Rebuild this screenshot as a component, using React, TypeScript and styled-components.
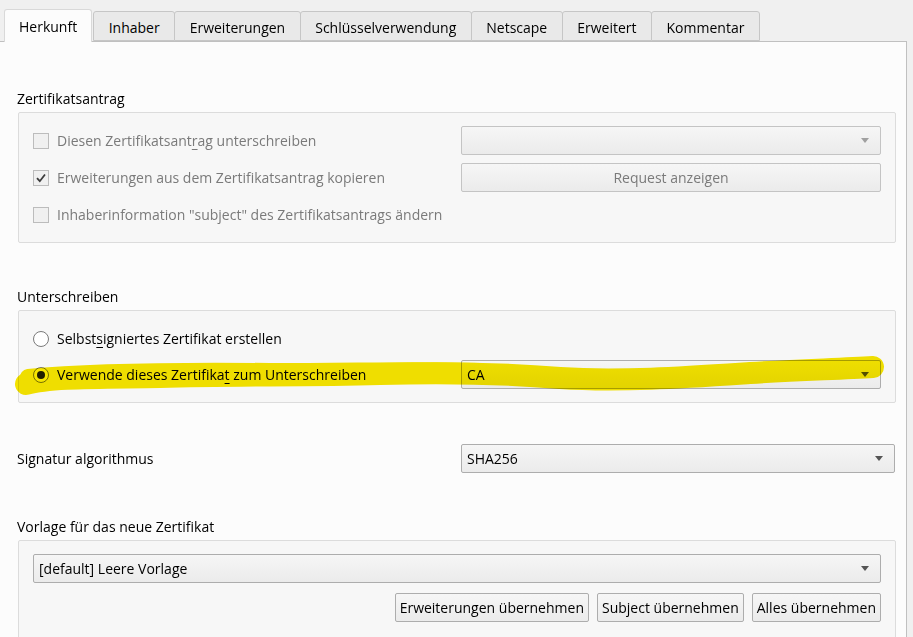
import React from 'react'
import styled, { createGlobalStyle } from 'styled-components'

const GlobalStyle = createGlobalStyle`
  html, body {
    margin: 0;
    padding: 0;
    background: #f0f0f0;
  }
  body {
    font-family: "Open Sans", "Noto Sans", "DejaVu Sans", sans-serif;
    font-size: 14px;
    color: #000;
  }
`

const Screen = styled.div`
  position: relative;
  width: 913px;
  height: 637px;
  overflow: hidden;
`

const TabBar = styled.div`
  display: flex;
  align-items: flex-end;
  height: 41px;
  padding-left: 4px;
  box-sizing: border-box;
`

const Tab = styled.div<{ $active?: boolean }>`
  position: relative;
  box-sizing: border-box;
  height: ${p => (p.$active ? 33 : 30)}px;
  padding: 0 ${p => (p.$active ? 14 : 14.5)}px;
  margin-right: ${p => (p.$active ? 1 : -1)}px;
  margin-bottom: ${p => (p.$active ? -1 : 0)}px;
  display: flex;
  align-items: center;
  padding-top: ${p => (p.$active ? 0 : 2)}px;
  border: 1px solid ${p => (p.$active ? '#d9d9d9' : '#c6c6c6')};
  border-bottom: ${p => (p.$active ? 'none' : '1px solid #c6c6c6')};
  border-radius: 3px 3px 0 0;
  background: ${p => (p.$active ? '#fcfcfc' : '#e9e9e9')};
  z-index: ${p => (p.$active ? 2 : 1)};
  white-space: nowrap;
`

const Pane = styled.div`
  box-sizing: border-box;
  width: 908px;
  margin-left: -1px;
  height: 600px;
  border: 1px solid #c0c0c0;
  border-bottom: none;
  background: #fcfcfc;
  padding: 47px 10px 0 18px;
`

const SectionTitle = styled.div`
  height: 20px;
  line-height: 20px;
  margin-left: -1px;
  margin-bottom: 3px;
`

const FieldLabel = styled.div`
  line-height: 20px;
  margin-left: -1px;
`

const GroupBox = styled.div`
  box-sizing: border-box;
  border: 1px solid #dcdcdc;
  border-radius: 2px;
  background: #f7f7f7;
  padding: 13px 14px 13px 14px;
`

const FormGrid = styled.div<{ $gap: number }>`
  display: grid;
  grid-template-columns: 1fr 420px;
  grid-auto-rows: 29px;
  row-gap: ${p => p.$gap}px;
  column-gap: 8px;
  align-items: center;
`

const OptionRow = styled.label<{ $disabled?: boolean }>`
  display: flex;
  align-items: center;
  gap: 8px;
  color: ${p => (p.$disabled ? '#7a7a7a' : '#000')};
  white-space: nowrap;
`

const CheckBox = styled.span`
  box-sizing: border-box;
  width: 16px;
  height: 16px;
  border: 1px solid #bcbcbc;
  background: #f0f0f0;
  display: flex;
  align-items: center;
  justify-content: center;
  flex: none;
`

const Radio = styled.span<{ $checked?: boolean }>`
  box-sizing: border-box;
  width: 16px;
  height: 16px;
  border-radius: 50%;
  border: 1px solid #7a7a7a;
  background: #fff;
  display: flex;
  align-items: center;
  justify-content: center;
  flex: none;
  &::after {
    content: '';
    display: ${p => (p.$checked ? 'block' : 'none')};
    width: 8px;
    height: 8px;
    border-radius: 50%;
    background: #222;
  }
`

const Mn = styled.span`
  text-decoration: underline;
  text-underline-offset: 3px;
`

const Combo = styled.div<{ $disabled?: boolean }>`
  box-sizing: border-box;
  height: 29px;
  width: 100%;
  border: 1px solid ${p => (p.$disabled ? '#c4c4c4' : '#adadad')};
  border-radius: 2px;
  background: linear-gradient(#f6f6f6, #ebebeb);
  display: flex;
  align-items: center;
  padding: 0 11px 0 5px;
  color: ${p => (p.$disabled ? '#7a7a7a' : '#000')};
  &::after {
    content: '';
    margin-left: auto;
    border-left: 4px solid transparent;
    border-right: 4px solid transparent;
    border-top: 5px solid ${p => (p.$disabled ? '#a0a0a0' : '#555')};
  }
`

const PushButton = styled.div<{ $disabled?: boolean }>`
  box-sizing: border-box;
  height: 29px;
  border: 1px solid ${p => (p.$disabled ? '#c4c4c4' : '#adadad')};
  border-radius: 2px;
  background: linear-gradient(#f6f6f6, #ebebeb);
  display: flex;
  align-items: center;
  justify-content: center;
  padding: 0 4px;
  color: ${p => (p.$disabled ? '#7a7a7a' : '#000')};
  white-space: nowrap;
`

const Spacer = styled.div<{ $h: number }>`
  height: ${p => p.$h}px;
`

const AlgoRow = styled.div`
  display: grid;
  grid-template-columns: 1fr 434px;
  grid-template-rows: 29px;
  align-items: center;
  padding-right: 1px;
`

const TemplateStack = styled.div`
  display: flex;
  flex-direction: column;
  gap: 10px;
  padding-bottom: 20px;
`

const ButtonRow = styled.div`
  display: flex;
  justify-content: flex-end;
  gap: 8px;
`

const Highlight = styled.svg`
  position: absolute;
  left: 0;
  top: 0;
  pointer-events: none;
  mix-blend-mode: multiply;
`

const tabs = ['Herkunft', 'Inhaber', 'Erweiterungen', 'Schlüsselverwendung', 'Netscape', 'Erweitert', 'Kommentar']

export default function App() {
  return (
    <Screen>
      <GlobalStyle />
      <TabBar>
        {tabs.map((t, i) => (
          <Tab key={t} $active={i === 0}>{t}</Tab>
        ))}
      </TabBar>
      <Pane>
        <SectionTitle>Zertifikatsantrag</SectionTitle>
        <GroupBox>
          <FormGrid $gap={8}>
            <OptionRow $disabled>
              <CheckBox />
              <span>Diesen Zertifikatsant<Mn>r</Mn>ag unterschreiben</span>
            </OptionRow>
            <Combo $disabled />
            <OptionRow $disabled>
              <CheckBox>
                <svg width="12" height="12" viewBox="0 0 12 12">
                  <path d="M2 6.2 L4.8 9.2 L10 2.5" fill="none" stroke="#3c3c3c" strokeWidth="1.8" />
                </svg>
              </CheckBox>
              <span>Erweiterungen aus dem Zertifikatsantrag kopieren</span>
            </OptionRow>
            <PushButton $disabled>Request anzeigen</PushButton>
            <OptionRow $disabled>
              <CheckBox />
              <span>Inhaberinformation "subject" des Zertifikatsantrags ändern</span>
            </OptionRow>
            <div />
          </FormGrid>
        </GroupBox>

        <Spacer $h={44} />
        <SectionTitle>Unterschreiben</SectionTitle>
        <GroupBox>
          <FormGrid $gap={7}>
            <OptionRow>
              <Radio />
              <span>Selbst<Mn>s</Mn>igniertes Zertifikat erstellen</span>
            </OptionRow>
            <div />
            <OptionRow>
              <Radio $checked />
              <span>Verwende dieses Zertifika<Mn>t</Mn> zum Unterschreiben</span>
            </OptionRow>
            <Combo>CA</Combo>
          </FormGrid>
        </GroupBox>

        <Spacer $h={41} />
        <AlgoRow>
          <FieldLabel>Signatur algorithmus</FieldLabel>
          <Combo>SHA256</Combo>
        </AlgoRow>

        <Spacer $h={44} />
        <SectionTitle>Vorlage für das neue Zertifikat</SectionTitle>
        <GroupBox>
          <TemplateStack>
            <Combo>[default] Leere Vorlage</Combo>
            <ButtonRow>
              <PushButton>Erweiterungen übernehmen</PushButton>
              <PushButton>Subject übernehmen</PushButton>
              <PushButton>Alles übernehmen</PushButton>
            </ButtonRow>
          </TemplateStack>
        </GroupBox>
      </Pane>

      <Highlight width="913" height="637" viewBox="0 0 913 637">
        <path
          d="M26 384 C50 377 100 378 160 377 C240 375 300 376 380 374 C450 372 500 373 560 378 C620 382 690 377 750 373 C800 370 840 369 873 367"
          fill="none"
          stroke="#f7e600"
          strokeWidth="22"
          strokeLinecap="round"
        />
        <path
          d="M28 377 C90 371 170 370 270 371 C360 371 420 369 480 371"
          fill="none"
          stroke="#f7e600"
          strokeWidth="16"
          strokeLinecap="round"
        />
      </Highlight>
    </Screen>
  )
}
